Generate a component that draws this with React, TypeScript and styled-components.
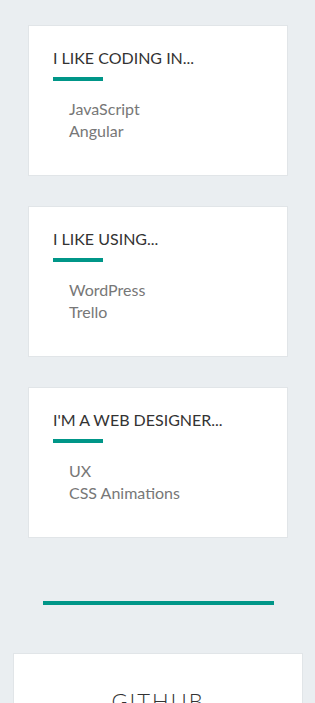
import React from "react";
import styled, { createGlobalStyle } from "styled-components";

const Global = createGlobalStyle`
  html, body {
    margin: 0;
    padding: 0;
    background: #eaeef1;
    overflow: hidden;
  }
  body {
    font-family: Lato, "Noto Sans", sans-serif;
  }
`;

const Page = styled.div`
  display: flex;
  flex-direction: column;
  align-items: center;
  padding: 25px 27px 0 28px;
`;

const CardList = styled.div`
  display: flex;
  flex-direction: column;
  gap: 30px;
`;

const Card = styled.section`
  box-sizing: border-box;
  width: 260px;
  background: #ffffff;
  border: 1px solid #e1e5e8;
  padding: 23px 24px 33px;
`;

const CardTitle = styled.h3`
  margin: 0;
  font-family: Lato, sans-serif;
  font-weight: 400;
  font-size: 16px;
  line-height: 18px;
  color: #333333;
  text-transform: uppercase;
`;

const Accent = styled.div`
  width: 50px;
  height: 4px;
  margin-top: 10px;
  background: #009688;
`;

const Items = styled.ul`
  list-style: none;
  margin: 17px 0 0;
  padding: 0 0 0 16px;
`;

const Item = styled.li`
  font-family: Lato, sans-serif;
  font-size: 16px;
  line-height: 22px;
  color: #777777;
`;

const Divider = styled.hr`
  width: 231px;
  height: 4px;
  border: 0;
  margin: 63px 0 0;
  background: #009688;
`;

const Panel = styled.section`
  box-sizing: border-box;
  width: 290px;
  margin-top: 48px;
  min-height: 200px;
  background: #ffffff;
  border: 1px solid #e1e5e8;
  padding-top: 33px;
  text-align: center;
`;

const PanelTitle = styled.h2`
  margin: 0;
  font-family: Lato, sans-serif;
  font-weight: 300;
  font-size: 22px;
  line-height: 28px;
  letter-spacing: 2px;
  color: #333333;
  text-transform: uppercase;
`;

const groups = [
  { title: "I like coding in...", items: ["JavaScript", "Angular"] },
  { title: "I like using...", items: ["WordPress", "Trello"] },
  { title: "I'm a web designer...", items: ["UX", "CSS Animations"] },
];

export default function App() {
  return (
    <>
      <Global />
      <Page>
        <CardList>
          {groups.map((g) => (
            <Card key={g.title}>
              <CardTitle>{g.title}</CardTitle>
              <Accent />
              <Items>
                {g.items.map((i) => (
                  <Item key={i}>{i}</Item>
                ))}
              </Items>
            </Card>
          ))}
        </CardList>
        <Divider />
        <Panel>
          <PanelTitle>Github</PanelTitle>
        </Panel>
      </Page>
    </>
  );
}
